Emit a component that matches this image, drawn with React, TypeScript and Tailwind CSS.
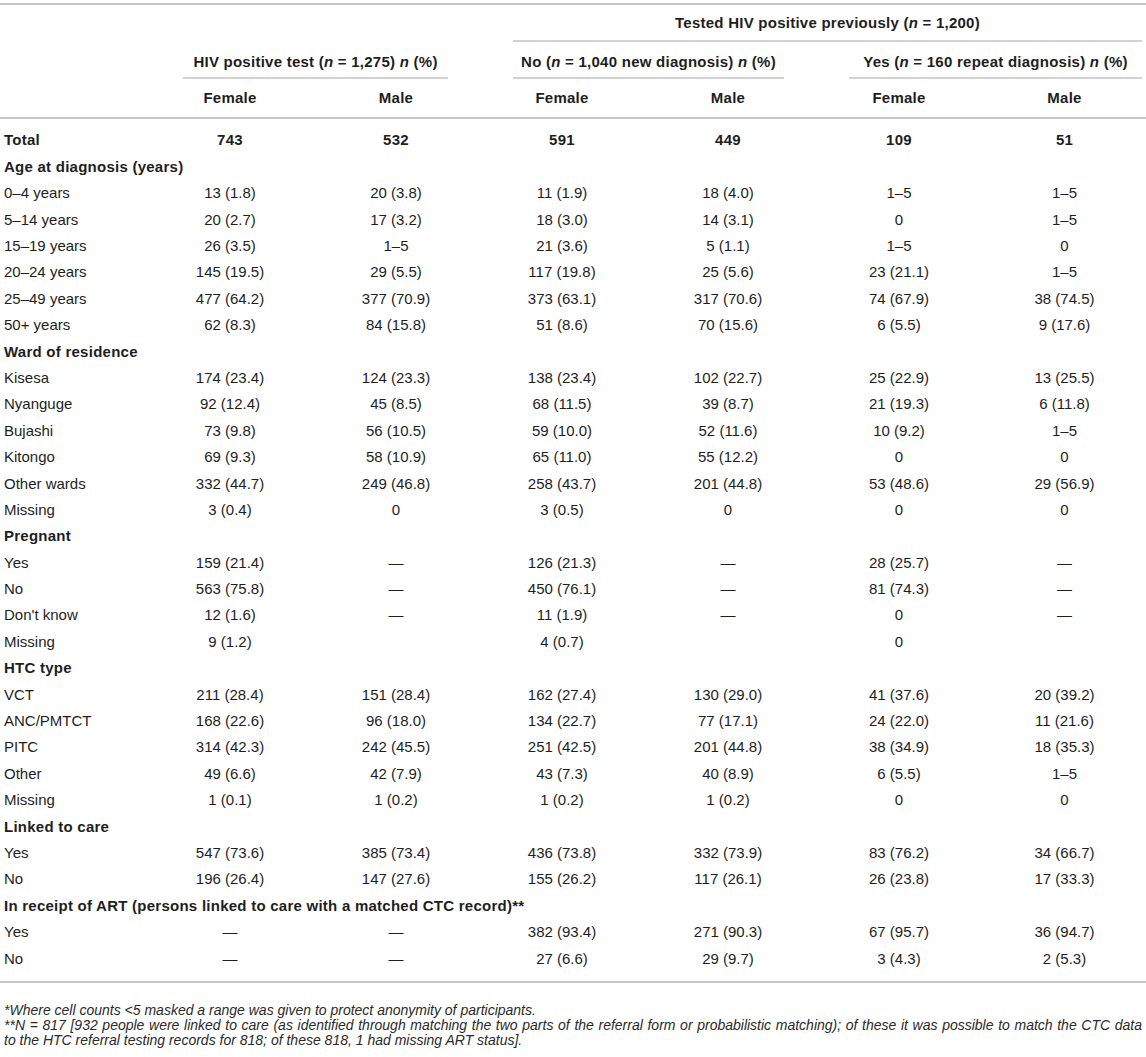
import React from "react";

type Row =
  | { kind: "section"; label: React.ReactNode }
  | { kind: "data"; label: string; cells: string[]; bold?: boolean };

const ROWS: Row[] = [
  { kind: "data", label: "Total", cells: ["743", "532", "591", "449", "109", "51"], bold: true },
  { kind: "section", label: "Age at diagnosis (years)" },
  { kind: "data", label: "0–4 years", cells: ["13 (1.8)", "20 (3.8)", "11 (1.9)", "18 (4.0)", "1–5", "1–5"] },
  { kind: "data", label: "5–14 years", cells: ["20 (2.7)", "17 (3.2)", "18 (3.0)", "14 (3.1)", "0", "1–5"] },
  { kind: "data", label: "15–19 years", cells: ["26 (3.5)", "1–5", "21 (3.6)", "5 (1.1)", "1–5", "0"] },
  { kind: "data", label: "20–24 years", cells: ["145 (19.5)", "29 (5.5)", "117 (19.8)", "25 (5.6)", "23 (21.1)", "1–5"] },
  { kind: "data", label: "25–49 years", cells: ["477 (64.2)", "377 (70.9)", "373 (63.1)", "317 (70.6)", "74 (67.9)", "38 (74.5)"] },
  { kind: "data", label: "50+ years", cells: ["62 (8.3)", "84 (15.8)", "51 (8.6)", "70 (15.6)", "6 (5.5)", "9 (17.6)"] },
  { kind: "section", label: "Ward of residence" },
  { kind: "data", label: "Kisesa", cells: ["174 (23.4)", "124 (23.3)", "138 (23.4)", "102 (22.7)", "25 (22.9)", "13 (25.5)"] },
  { kind: "data", label: "Nyanguge", cells: ["92 (12.4)", "45 (8.5)", "68 (11.5)", "39 (8.7)", "21 (19.3)", "6 (11.8)"] },
  { kind: "data", label: "Bujashi", cells: ["73 (9.8)", "56 (10.5)", "59 (10.0)", "52 (11.6)", "10 (9.2)", "1–5"] },
  { kind: "data", label: "Kitongo", cells: ["69 (9.3)", "58 (10.9)", "65 (11.0)", "55 (12.2)", "0", "0"] },
  { kind: "data", label: "Other wards", cells: ["332 (44.7)", "249 (46.8)", "258 (43.7)", "201 (44.8)", "53 (48.6)", "29 (56.9)"] },
  { kind: "data", label: "Missing", cells: ["3 (0.4)", "0", "3 (0.5)", "0", "0", "0"] },
  { kind: "section", label: "Pregnant" },
  { kind: "data", label: "Yes", cells: ["159 (21.4)", "—", "126 (21.3)", "—", "28 (25.7)", "—"] },
  { kind: "data", label: "No", cells: ["563 (75.8)", "—", "450 (76.1)", "—", "81 (74.3)", "—"] },
  { kind: "data", label: "Don't know", cells: ["12 (1.6)", "—", "11 (1.9)", "—", "0", "—"] },
  { kind: "data", label: "Missing", cells: ["9 (1.2)", "", "4 (0.7)", "", "0", ""] },
  { kind: "section", label: "HTC type" },
  { kind: "data", label: "VCT", cells: ["211 (28.4)", "151 (28.4)", "162 (27.4)", "130 (29.0)", "41 (37.6)", "20 (39.2)"] },
  { kind: "data", label: "ANC/PMTCT", cells: ["168 (22.6)", "96 (18.0)", "134 (22.7)", "77 (17.1)", "24 (22.0)", "11 (21.6)"] },
  { kind: "data", label: "PITC", cells: ["314 (42.3)", "242 (45.5)", "251 (42.5)", "201 (44.8)", "38 (34.9)", "18 (35.3)"] },
  { kind: "data", label: "Other", cells: ["49 (6.6)", "42 (7.9)", "43 (7.3)", "40 (8.9)", "6 (5.5)", "1–5"] },
  { kind: "data", label: "Missing", cells: ["1 (0.1)", "1 (0.2)", "1 (0.2)", "1 (0.2)", "0", "0"] },
  { kind: "section", label: "Linked to care" },
  { kind: "data", label: "Yes", cells: ["547 (73.6)", "385 (73.4)", "436 (73.8)", "332 (73.9)", "83 (76.2)", "34 (66.7)"] },
  { kind: "data", label: "No", cells: ["196 (26.4)", "147 (27.6)", "155 (26.2)", "117 (26.1)", "26 (23.8)", "17 (33.3)"] },
  { kind: "section", label: "In receipt of ART (persons linked to care with a matched CTC record)**" },
  { kind: "data", label: "Yes", cells: ["—", "—", "382 (93.4)", "271 (90.3)", "67 (95.7)", "36 (94.7)"] },
  { kind: "data", label: "No", cells: ["—", "—", "27 (6.6)", "29 (9.7)", "3 (4.3)", "2 (5.3)"] },
];

const GRID = "grid grid-cols-[147px_166px_166px_166px_166px_176px_155px]";

function N() {
  return <i>n</i>;
}

export default function App() {
  return (
    <div className="w-[1146px] bg-white pt-[3px] font-['Liberation_Sans',Arial,sans-serif] text-[15px] text-[#1e1e1e]">
      <div className="border-t-2 border-[#c6c6c6]">
        {/* Header row 1 */}
        <div className={GRID}>
          <div className="col-start-4 col-span-4 ml-[34px] h-[37px] pt-[2px] flex items-center justify-center border-b-2 border-[#d2d2d2] font-bold tracking-[0.25px]">
            <span>
              Tested HIV positive previously (<N /> = 1,200)
            </span>
          </div>
        </div>

        {/* Header row 2 */}
        <div className={GRID}>
          <div className="col-start-2 col-span-2 ml-[36px] mr-[31px] h-[37px] pt-[6px] flex items-center justify-center border-b-2 border-[#d2d2d2] font-bold tracking-[0.25px] whitespace-nowrap">
            <span>
              HIV positive test (<N /> = 1,275) <N /> (%)
            </span>
          </div>
          <div className="col-start-4 col-span-2 ml-[34px] mr-[27px] h-[37px] pt-[6px] flex items-center justify-center border-b-2 border-[#d2d2d2] font-bold tracking-[0.25px] whitespace-nowrap">
            <span>
              No (<N /> = 1,040 new diagnosis) <N /> (%)
            </span>
          </div>
          <div className="col-start-6 col-span-2 ml-[38px] h-[37px] pt-[6px] flex items-center justify-center border-b-2 border-[#d2d2d2] font-bold tracking-[0.25px] whitespace-nowrap">
            <span>
              Yes (<N /> = 160 repeat diagnosis) <N /> (%)
            </span>
          </div>
        </div>

        {/* Header row 3 */}
        <div className={`${GRID} h-[40px] items-center border-b-2 border-[#c6c6c6] font-bold tracking-[0.25px]`}>
          <div />
          {["Female", "Male", "Female", "Male", "Female", "Male"].map((h, i) => (
            <div key={i} className="text-center">
              {h}
            </div>
          ))}
        </div>

        {/* Body */}
        <div className="pt-[8.5px] pb-[9px] border-b-2 border-[#c6c6c6]">
          {ROWS.map((r, i) =>
            r.kind === "section" ? (
              <div key={i} className="h-[26.4px] flex items-center pl-[4px] font-bold tracking-[0.25px] whitespace-nowrap">
                {r.label}
              </div>
            ) : (
              <div
                key={i}
                className={`${GRID} h-[26.4px] items-center ${r.bold ? "font-bold tracking-[0.25px]" : ""}`}
              >
                <div className="pl-[4px] whitespace-nowrap">{r.label}</div>
                {r.cells.map((c, j) => (
                  <div key={j} className="text-center whitespace-nowrap">
                    {c}
                  </div>
                ))}
              </div>
            ),
          )}
        </div>

        {/* Footnotes */}
        <div className="mt-[20px] pl-[4px] pr-[4px] text-[14px] leading-[15px] italic text-[#2a2a2a]">
          <p className="whitespace-nowrap">
            *Where cell counts &lt;5 masked a range was given to protect anonymity of participants.
          </p>
          <p className="text-justify [text-align-last:justify] whitespace-nowrap">
            **N = 817 [932 people were linked to care (as identified through matching the two parts of the referral form or probabilistic matching); of these it was possible to match the CTC data
          </p>
          <p className="whitespace-nowrap">
            to the HTC referral testing records for 818; of these 818, 1 had missing ART status].
          </p>
        </div>
      </div>
    </div>
  );
}
